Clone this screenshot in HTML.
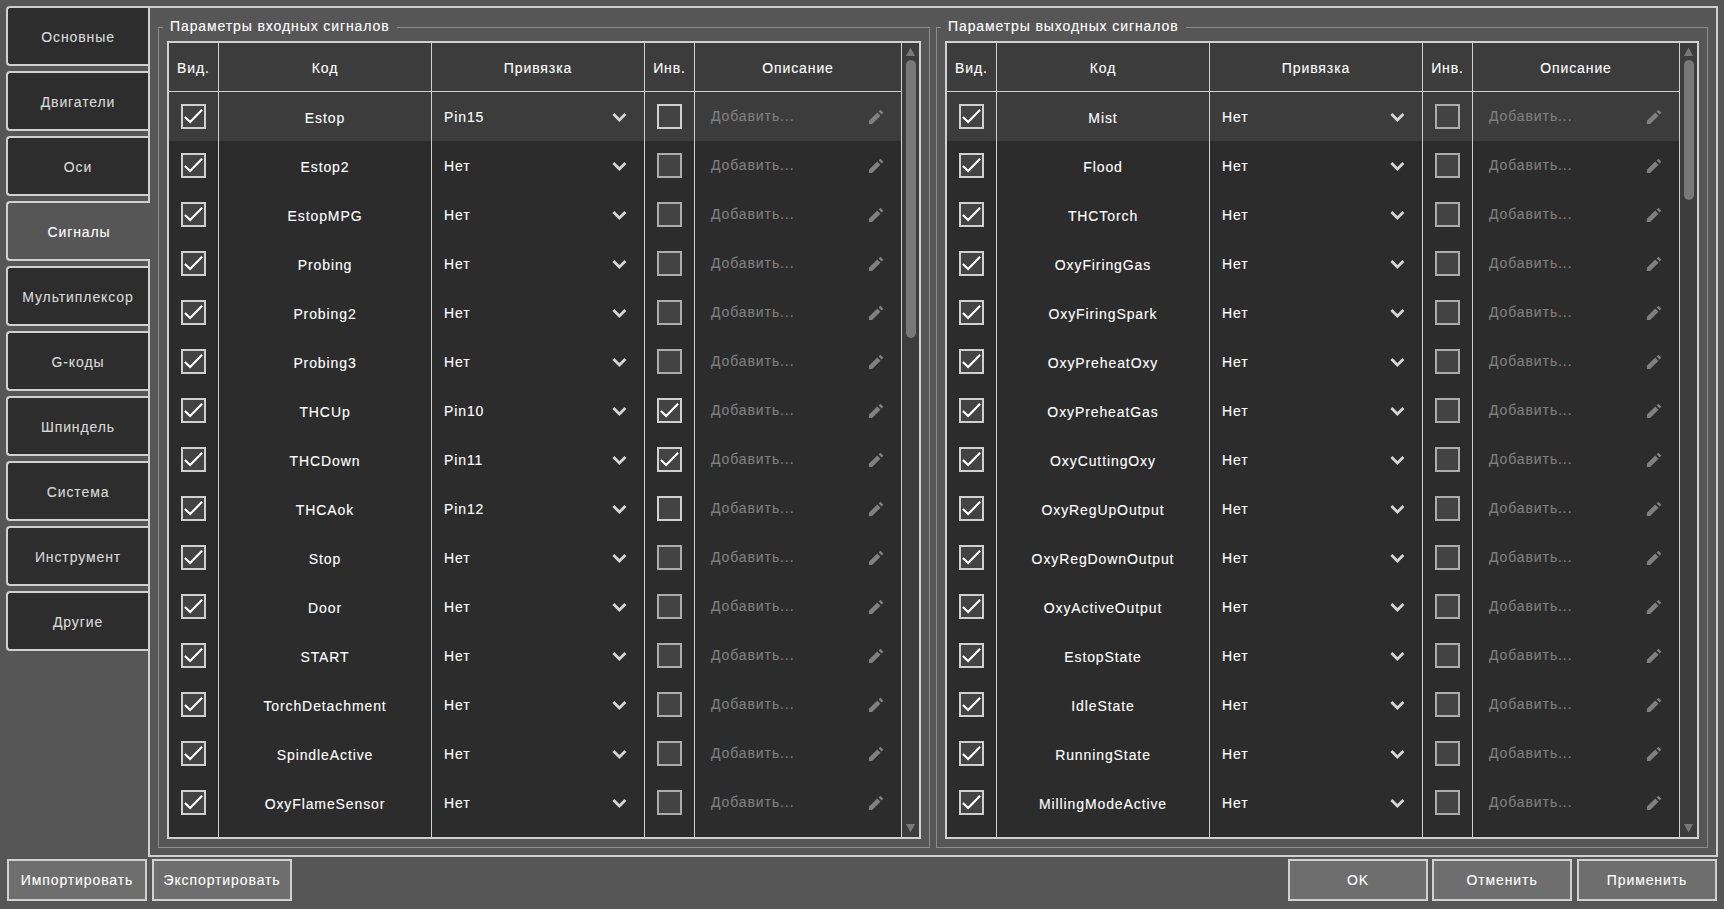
<!DOCTYPE html><html><head><meta charset="utf-8"><style>
*{box-sizing:border-box;margin:0;padding:0}
html,body{width:1724px;height:909px;overflow:hidden;background:#565656;font-family:"Liberation Sans",sans-serif;font-size:14px;letter-spacing:0.9px;color:#fff;-webkit-text-stroke:0.12px currentColor}
.a{position:absolute}
.tab{position:absolute;left:6px;width:142px;height:60px;border:2px solid #d0d0d0;border-right:none;border-radius:4px 0 0 4px;background:#2d2d2d;color:#dadada;text-align:center;line-height:58px}
.tab.on{background:#565656;color:#fff;width:144px}
.panel{position:absolute;left:148px;top:6px;width:1570px;height:851px;border:2px solid #d0d0d0;background:#565656}
.grp{position:absolute;top:27px;width:772px;height:821px;border:1px solid #8c8c8c}
.gt{position:absolute;top:17px;height:18px;line-height:18px;background:#565656;padding:0 7px;white-space:nowrap}
.tbl{position:absolute;top:41px;width:754px;height:798px;border:2px solid #d0d0d0;background:#2c2c2c;overflow:hidden}
.hdr{position:absolute;left:0;top:0;width:732px;height:49px;background:#3c3c3c;border-bottom:1px solid #d0d0d0}
.hc{position:absolute;top:1px;height:48px;line-height:48px;text-align:center;white-space:nowrap}
.vl{position:absolute;top:0;width:1px;height:794px;background:#d0d0d0}
.row{position:absolute;left:0;width:732px;height:49px}
.row.hl{background:#3c3c3c}
.cb{position:absolute;width:25px;height:25px;border:2px solid #d0d0d0;background:#434343;top:12px}
.cb svg{position:absolute;left:0;top:0}
.cb.dim{border-color:#acacac}
.code{position:absolute;left:50px;width:212px;top:2px;height:49px;line-height:49px;text-align:center;white-space:nowrap}
.bind{position:absolute;left:275px;top:1px;height:49px;line-height:49px;white-space:nowrap}
.chev{position:absolute;left:443px;top:19px}
.desc{position:absolute;left:542px;top:0px;height:49px;line-height:49px;color:#808080;white-space:nowrap}
.pen{position:absolute;left:697px;top:15px}
.sb{position:absolute;left:733px;top:0;width:17px;height:794px;background:#3c3c3c}
.btn{position:absolute;top:859px;width:140px;height:42px;border:2px solid #d0d0d0;background:#6e6e6e;text-align:center;line-height:38px;white-space:nowrap}
</style></head><body>
<div class="panel"></div>
<div class="tab" style="top:6px">Основные</div>
<div class="tab" style="top:71px">Двигатели</div>
<div class="tab" style="top:136px">Оси</div>
<div class="tab on" style="top:201px">Сигналы</div>
<div class="tab" style="top:266px">Мультиплексор</div>
<div class="tab" style="top:331px">G-коды</div>
<div class="tab" style="top:396px">Шпиндель</div>
<div class="tab" style="top:461px">Система</div>
<div class="tab" style="top:526px">Инструмент</div>
<div class="tab" style="top:591px">Другие</div>
<div class="grp" style="left:158px"></div>
<div class="gt" style="left:163px">Параметры входных сигналов</div>
<div class="grp" style="left:936px"></div>
<div class="gt" style="left:941px">Параметры выходных сигналов</div>
<div class="tbl" style="left:167px">
<div class="row hl" style="top:49px">
<div class="cb" style="left:12px"><svg width="21" height="21" viewBox="0 0 21 21"><polyline points="1.9,10.9 7.15,16.1 19.1,3.7" fill="none" stroke="#fff" stroke-width="2.1" stroke-linejoin="miter" stroke-linecap="butt"/></svg></div>
<div class="code">Estop</div>
<div class="bind">Pin15</div>
<div class="chev"><svg width="16" height="12" viewBox="0 0 16 12"><polyline points="1.4,2.1 7.4,8 13.4,2.1" fill="none" stroke="#d6d6d6" stroke-width="2.8"/></svg></div>
<div class="cb" style="left:488px"></div>
<div class="desc">Добавить...</div>
<div class="pen"><svg width="20" height="20" viewBox="0 0 20 20"><path fill="#808080" d="M2.9 17.1V13.8L11.25 5.45L14.5 8.7L6.1 17.1Z M12.6 4.6L14.35 2.85L17.35 5.85L15.6 7.6Z"/></svg></div>
</div>
<div class="row" style="top:98px">
<div class="cb" style="left:12px"><svg width="21" height="21" viewBox="0 0 21 21"><polyline points="1.9,10.9 7.15,16.1 19.1,3.7" fill="none" stroke="#fff" stroke-width="2.1" stroke-linejoin="miter" stroke-linecap="butt"/></svg></div>
<div class="code">Estop2</div>
<div class="bind">Нет</div>
<div class="chev"><svg width="16" height="12" viewBox="0 0 16 12"><polyline points="1.4,2.1 7.4,8 13.4,2.1" fill="none" stroke="#d6d6d6" stroke-width="2.8"/></svg></div>
<div class="cb dim" style="left:488px"></div>
<div class="desc">Добавить...</div>
<div class="pen"><svg width="20" height="20" viewBox="0 0 20 20"><path fill="#808080" d="M2.9 17.1V13.8L11.25 5.45L14.5 8.7L6.1 17.1Z M12.6 4.6L14.35 2.85L17.35 5.85L15.6 7.6Z"/></svg></div>
</div>
<div class="row" style="top:147px">
<div class="cb" style="left:12px"><svg width="21" height="21" viewBox="0 0 21 21"><polyline points="1.9,10.9 7.15,16.1 19.1,3.7" fill="none" stroke="#fff" stroke-width="2.1" stroke-linejoin="miter" stroke-linecap="butt"/></svg></div>
<div class="code">EstopMPG</div>
<div class="bind">Нет</div>
<div class="chev"><svg width="16" height="12" viewBox="0 0 16 12"><polyline points="1.4,2.1 7.4,8 13.4,2.1" fill="none" stroke="#d6d6d6" stroke-width="2.8"/></svg></div>
<div class="cb dim" style="left:488px"></div>
<div class="desc">Добавить...</div>
<div class="pen"><svg width="20" height="20" viewBox="0 0 20 20"><path fill="#808080" d="M2.9 17.1V13.8L11.25 5.45L14.5 8.7L6.1 17.1Z M12.6 4.6L14.35 2.85L17.35 5.85L15.6 7.6Z"/></svg></div>
</div>
<div class="row" style="top:196px">
<div class="cb" style="left:12px"><svg width="21" height="21" viewBox="0 0 21 21"><polyline points="1.9,10.9 7.15,16.1 19.1,3.7" fill="none" stroke="#fff" stroke-width="2.1" stroke-linejoin="miter" stroke-linecap="butt"/></svg></div>
<div class="code">Probing</div>
<div class="bind">Нет</div>
<div class="chev"><svg width="16" height="12" viewBox="0 0 16 12"><polyline points="1.4,2.1 7.4,8 13.4,2.1" fill="none" stroke="#d6d6d6" stroke-width="2.8"/></svg></div>
<div class="cb dim" style="left:488px"></div>
<div class="desc">Добавить...</div>
<div class="pen"><svg width="20" height="20" viewBox="0 0 20 20"><path fill="#808080" d="M2.9 17.1V13.8L11.25 5.45L14.5 8.7L6.1 17.1Z M12.6 4.6L14.35 2.85L17.35 5.85L15.6 7.6Z"/></svg></div>
</div>
<div class="row" style="top:245px">
<div class="cb" style="left:12px"><svg width="21" height="21" viewBox="0 0 21 21"><polyline points="1.9,10.9 7.15,16.1 19.1,3.7" fill="none" stroke="#fff" stroke-width="2.1" stroke-linejoin="miter" stroke-linecap="butt"/></svg></div>
<div class="code">Probing2</div>
<div class="bind">Нет</div>
<div class="chev"><svg width="16" height="12" viewBox="0 0 16 12"><polyline points="1.4,2.1 7.4,8 13.4,2.1" fill="none" stroke="#d6d6d6" stroke-width="2.8"/></svg></div>
<div class="cb dim" style="left:488px"></div>
<div class="desc">Добавить...</div>
<div class="pen"><svg width="20" height="20" viewBox="0 0 20 20"><path fill="#808080" d="M2.9 17.1V13.8L11.25 5.45L14.5 8.7L6.1 17.1Z M12.6 4.6L14.35 2.85L17.35 5.85L15.6 7.6Z"/></svg></div>
</div>
<div class="row" style="top:294px">
<div class="cb" style="left:12px"><svg width="21" height="21" viewBox="0 0 21 21"><polyline points="1.9,10.9 7.15,16.1 19.1,3.7" fill="none" stroke="#fff" stroke-width="2.1" stroke-linejoin="miter" stroke-linecap="butt"/></svg></div>
<div class="code">Probing3</div>
<div class="bind">Нет</div>
<div class="chev"><svg width="16" height="12" viewBox="0 0 16 12"><polyline points="1.4,2.1 7.4,8 13.4,2.1" fill="none" stroke="#d6d6d6" stroke-width="2.8"/></svg></div>
<div class="cb dim" style="left:488px"></div>
<div class="desc">Добавить...</div>
<div class="pen"><svg width="20" height="20" viewBox="0 0 20 20"><path fill="#808080" d="M2.9 17.1V13.8L11.25 5.45L14.5 8.7L6.1 17.1Z M12.6 4.6L14.35 2.85L17.35 5.85L15.6 7.6Z"/></svg></div>
</div>
<div class="row" style="top:343px">
<div class="cb" style="left:12px"><svg width="21" height="21" viewBox="0 0 21 21"><polyline points="1.9,10.9 7.15,16.1 19.1,3.7" fill="none" stroke="#fff" stroke-width="2.1" stroke-linejoin="miter" stroke-linecap="butt"/></svg></div>
<div class="code">THCUp</div>
<div class="bind">Pin10</div>
<div class="chev"><svg width="16" height="12" viewBox="0 0 16 12"><polyline points="1.4,2.1 7.4,8 13.4,2.1" fill="none" stroke="#d6d6d6" stroke-width="2.8"/></svg></div>
<div class="cb" style="left:488px"><svg width="21" height="21" viewBox="0 0 21 21"><polyline points="1.9,10.9 7.15,16.1 19.1,3.7" fill="none" stroke="#fff" stroke-width="2.1" stroke-linejoin="miter" stroke-linecap="butt"/></svg></div>
<div class="desc">Добавить...</div>
<div class="pen"><svg width="20" height="20" viewBox="0 0 20 20"><path fill="#808080" d="M2.9 17.1V13.8L11.25 5.45L14.5 8.7L6.1 17.1Z M12.6 4.6L14.35 2.85L17.35 5.85L15.6 7.6Z"/></svg></div>
</div>
<div class="row" style="top:392px">
<div class="cb" style="left:12px"><svg width="21" height="21" viewBox="0 0 21 21"><polyline points="1.9,10.9 7.15,16.1 19.1,3.7" fill="none" stroke="#fff" stroke-width="2.1" stroke-linejoin="miter" stroke-linecap="butt"/></svg></div>
<div class="code">THCDown</div>
<div class="bind">Pin11</div>
<div class="chev"><svg width="16" height="12" viewBox="0 0 16 12"><polyline points="1.4,2.1 7.4,8 13.4,2.1" fill="none" stroke="#d6d6d6" stroke-width="2.8"/></svg></div>
<div class="cb" style="left:488px"><svg width="21" height="21" viewBox="0 0 21 21"><polyline points="1.9,10.9 7.15,16.1 19.1,3.7" fill="none" stroke="#fff" stroke-width="2.1" stroke-linejoin="miter" stroke-linecap="butt"/></svg></div>
<div class="desc">Добавить...</div>
<div class="pen"><svg width="20" height="20" viewBox="0 0 20 20"><path fill="#808080" d="M2.9 17.1V13.8L11.25 5.45L14.5 8.7L6.1 17.1Z M12.6 4.6L14.35 2.85L17.35 5.85L15.6 7.6Z"/></svg></div>
</div>
<div class="row" style="top:441px">
<div class="cb" style="left:12px"><svg width="21" height="21" viewBox="0 0 21 21"><polyline points="1.9,10.9 7.15,16.1 19.1,3.7" fill="none" stroke="#fff" stroke-width="2.1" stroke-linejoin="miter" stroke-linecap="butt"/></svg></div>
<div class="code">THCAok</div>
<div class="bind">Pin12</div>
<div class="chev"><svg width="16" height="12" viewBox="0 0 16 12"><polyline points="1.4,2.1 7.4,8 13.4,2.1" fill="none" stroke="#d6d6d6" stroke-width="2.8"/></svg></div>
<div class="cb" style="left:488px"></div>
<div class="desc">Добавить...</div>
<div class="pen"><svg width="20" height="20" viewBox="0 0 20 20"><path fill="#808080" d="M2.9 17.1V13.8L11.25 5.45L14.5 8.7L6.1 17.1Z M12.6 4.6L14.35 2.85L17.35 5.85L15.6 7.6Z"/></svg></div>
</div>
<div class="row" style="top:490px">
<div class="cb" style="left:12px"><svg width="21" height="21" viewBox="0 0 21 21"><polyline points="1.9,10.9 7.15,16.1 19.1,3.7" fill="none" stroke="#fff" stroke-width="2.1" stroke-linejoin="miter" stroke-linecap="butt"/></svg></div>
<div class="code">Stop</div>
<div class="bind">Нет</div>
<div class="chev"><svg width="16" height="12" viewBox="0 0 16 12"><polyline points="1.4,2.1 7.4,8 13.4,2.1" fill="none" stroke="#d6d6d6" stroke-width="2.8"/></svg></div>
<div class="cb dim" style="left:488px"></div>
<div class="desc">Добавить...</div>
<div class="pen"><svg width="20" height="20" viewBox="0 0 20 20"><path fill="#808080" d="M2.9 17.1V13.8L11.25 5.45L14.5 8.7L6.1 17.1Z M12.6 4.6L14.35 2.85L17.35 5.85L15.6 7.6Z"/></svg></div>
</div>
<div class="row" style="top:539px">
<div class="cb" style="left:12px"><svg width="21" height="21" viewBox="0 0 21 21"><polyline points="1.9,10.9 7.15,16.1 19.1,3.7" fill="none" stroke="#fff" stroke-width="2.1" stroke-linejoin="miter" stroke-linecap="butt"/></svg></div>
<div class="code">Door</div>
<div class="bind">Нет</div>
<div class="chev"><svg width="16" height="12" viewBox="0 0 16 12"><polyline points="1.4,2.1 7.4,8 13.4,2.1" fill="none" stroke="#d6d6d6" stroke-width="2.8"/></svg></div>
<div class="cb dim" style="left:488px"></div>
<div class="desc">Добавить...</div>
<div class="pen"><svg width="20" height="20" viewBox="0 0 20 20"><path fill="#808080" d="M2.9 17.1V13.8L11.25 5.45L14.5 8.7L6.1 17.1Z M12.6 4.6L14.35 2.85L17.35 5.85L15.6 7.6Z"/></svg></div>
</div>
<div class="row" style="top:588px">
<div class="cb" style="left:12px"><svg width="21" height="21" viewBox="0 0 21 21"><polyline points="1.9,10.9 7.15,16.1 19.1,3.7" fill="none" stroke="#fff" stroke-width="2.1" stroke-linejoin="miter" stroke-linecap="butt"/></svg></div>
<div class="code">START</div>
<div class="bind">Нет</div>
<div class="chev"><svg width="16" height="12" viewBox="0 0 16 12"><polyline points="1.4,2.1 7.4,8 13.4,2.1" fill="none" stroke="#d6d6d6" stroke-width="2.8"/></svg></div>
<div class="cb dim" style="left:488px"></div>
<div class="desc">Добавить...</div>
<div class="pen"><svg width="20" height="20" viewBox="0 0 20 20"><path fill="#808080" d="M2.9 17.1V13.8L11.25 5.45L14.5 8.7L6.1 17.1Z M12.6 4.6L14.35 2.85L17.35 5.85L15.6 7.6Z"/></svg></div>
</div>
<div class="row" style="top:637px">
<div class="cb" style="left:12px"><svg width="21" height="21" viewBox="0 0 21 21"><polyline points="1.9,10.9 7.15,16.1 19.1,3.7" fill="none" stroke="#fff" stroke-width="2.1" stroke-linejoin="miter" stroke-linecap="butt"/></svg></div>
<div class="code">TorchDetachment</div>
<div class="bind">Нет</div>
<div class="chev"><svg width="16" height="12" viewBox="0 0 16 12"><polyline points="1.4,2.1 7.4,8 13.4,2.1" fill="none" stroke="#d6d6d6" stroke-width="2.8"/></svg></div>
<div class="cb dim" style="left:488px"></div>
<div class="desc">Добавить...</div>
<div class="pen"><svg width="20" height="20" viewBox="0 0 20 20"><path fill="#808080" d="M2.9 17.1V13.8L11.25 5.45L14.5 8.7L6.1 17.1Z M12.6 4.6L14.35 2.85L17.35 5.85L15.6 7.6Z"/></svg></div>
</div>
<div class="row" style="top:686px">
<div class="cb" style="left:12px"><svg width="21" height="21" viewBox="0 0 21 21"><polyline points="1.9,10.9 7.15,16.1 19.1,3.7" fill="none" stroke="#fff" stroke-width="2.1" stroke-linejoin="miter" stroke-linecap="butt"/></svg></div>
<div class="code">SpindleActive</div>
<div class="bind">Нет</div>
<div class="chev"><svg width="16" height="12" viewBox="0 0 16 12"><polyline points="1.4,2.1 7.4,8 13.4,2.1" fill="none" stroke="#d6d6d6" stroke-width="2.8"/></svg></div>
<div class="cb dim" style="left:488px"></div>
<div class="desc">Добавить...</div>
<div class="pen"><svg width="20" height="20" viewBox="0 0 20 20"><path fill="#808080" d="M2.9 17.1V13.8L11.25 5.45L14.5 8.7L6.1 17.1Z M12.6 4.6L14.35 2.85L17.35 5.85L15.6 7.6Z"/></svg></div>
</div>
<div class="row" style="top:735px">
<div class="cb" style="left:12px"><svg width="21" height="21" viewBox="0 0 21 21"><polyline points="1.9,10.9 7.15,16.1 19.1,3.7" fill="none" stroke="#fff" stroke-width="2.1" stroke-linejoin="miter" stroke-linecap="butt"/></svg></div>
<div class="code">OxyFlameSensor</div>
<div class="bind">Нет</div>
<div class="chev"><svg width="16" height="12" viewBox="0 0 16 12"><polyline points="1.4,2.1 7.4,8 13.4,2.1" fill="none" stroke="#d6d6d6" stroke-width="2.8"/></svg></div>
<div class="cb dim" style="left:488px"></div>
<div class="desc">Добавить...</div>
<div class="pen"><svg width="20" height="20" viewBox="0 0 20 20"><path fill="#808080" d="M2.9 17.1V13.8L11.25 5.45L14.5 8.7L6.1 17.1Z M12.6 4.6L14.35 2.85L17.35 5.85L15.6 7.6Z"/></svg></div>
</div>
<div class="hdr">
<div class="hc" style="left:0px;width:49px">Вид.</div>
<div class="hc" style="left:50px;width:212px">Код</div>
<div class="hc" style="left:263px;width:212px">Привязка</div>
<div class="hc" style="left:476px;width:49px">Инв.</div>
<div class="hc" style="left:526px;width:206px">Описание</div>
</div>
<div class="vl" style="left:49px"></div>
<div class="vl" style="left:262px"></div>
<div class="vl" style="left:475px"></div>
<div class="vl" style="left:525px"></div>
<div class="vl" style="left:732px"></div>
<div class="sb">
<svg class="a" style="left:0;top:0" width="17" height="794"><polygon points="4,13 13,13 8.5,4.5" fill="#787878"/><polygon points="4,781 13,781 8.5,789.5" fill="#787878"/><rect x="4" y="17" width="10" height="278" rx="5" fill="#787878"/></svg>
</div>
</div>
<div class="tbl" style="left:945px">
<div class="row hl" style="top:49px">
<div class="cb" style="left:12px"><svg width="21" height="21" viewBox="0 0 21 21"><polyline points="1.9,10.9 7.15,16.1 19.1,3.7" fill="none" stroke="#fff" stroke-width="2.1" stroke-linejoin="miter" stroke-linecap="butt"/></svg></div>
<div class="code">Mist</div>
<div class="bind">Нет</div>
<div class="chev"><svg width="16" height="12" viewBox="0 0 16 12"><polyline points="1.4,2.1 7.4,8 13.4,2.1" fill="none" stroke="#d6d6d6" stroke-width="2.8"/></svg></div>
<div class="cb dim" style="left:488px"></div>
<div class="desc">Добавить...</div>
<div class="pen"><svg width="20" height="20" viewBox="0 0 20 20"><path fill="#808080" d="M2.9 17.1V13.8L11.25 5.45L14.5 8.7L6.1 17.1Z M12.6 4.6L14.35 2.85L17.35 5.85L15.6 7.6Z"/></svg></div>
</div>
<div class="row" style="top:98px">
<div class="cb" style="left:12px"><svg width="21" height="21" viewBox="0 0 21 21"><polyline points="1.9,10.9 7.15,16.1 19.1,3.7" fill="none" stroke="#fff" stroke-width="2.1" stroke-linejoin="miter" stroke-linecap="butt"/></svg></div>
<div class="code">Flood</div>
<div class="bind">Нет</div>
<div class="chev"><svg width="16" height="12" viewBox="0 0 16 12"><polyline points="1.4,2.1 7.4,8 13.4,2.1" fill="none" stroke="#d6d6d6" stroke-width="2.8"/></svg></div>
<div class="cb dim" style="left:488px"></div>
<div class="desc">Добавить...</div>
<div class="pen"><svg width="20" height="20" viewBox="0 0 20 20"><path fill="#808080" d="M2.9 17.1V13.8L11.25 5.45L14.5 8.7L6.1 17.1Z M12.6 4.6L14.35 2.85L17.35 5.85L15.6 7.6Z"/></svg></div>
</div>
<div class="row" style="top:147px">
<div class="cb" style="left:12px"><svg width="21" height="21" viewBox="0 0 21 21"><polyline points="1.9,10.9 7.15,16.1 19.1,3.7" fill="none" stroke="#fff" stroke-width="2.1" stroke-linejoin="miter" stroke-linecap="butt"/></svg></div>
<div class="code">THCTorch</div>
<div class="bind">Нет</div>
<div class="chev"><svg width="16" height="12" viewBox="0 0 16 12"><polyline points="1.4,2.1 7.4,8 13.4,2.1" fill="none" stroke="#d6d6d6" stroke-width="2.8"/></svg></div>
<div class="cb dim" style="left:488px"></div>
<div class="desc">Добавить...</div>
<div class="pen"><svg width="20" height="20" viewBox="0 0 20 20"><path fill="#808080" d="M2.9 17.1V13.8L11.25 5.45L14.5 8.7L6.1 17.1Z M12.6 4.6L14.35 2.85L17.35 5.85L15.6 7.6Z"/></svg></div>
</div>
<div class="row" style="top:196px">
<div class="cb" style="left:12px"><svg width="21" height="21" viewBox="0 0 21 21"><polyline points="1.9,10.9 7.15,16.1 19.1,3.7" fill="none" stroke="#fff" stroke-width="2.1" stroke-linejoin="miter" stroke-linecap="butt"/></svg></div>
<div class="code">OxyFiringGas</div>
<div class="bind">Нет</div>
<div class="chev"><svg width="16" height="12" viewBox="0 0 16 12"><polyline points="1.4,2.1 7.4,8 13.4,2.1" fill="none" stroke="#d6d6d6" stroke-width="2.8"/></svg></div>
<div class="cb dim" style="left:488px"></div>
<div class="desc">Добавить...</div>
<div class="pen"><svg width="20" height="20" viewBox="0 0 20 20"><path fill="#808080" d="M2.9 17.1V13.8L11.25 5.45L14.5 8.7L6.1 17.1Z M12.6 4.6L14.35 2.85L17.35 5.85L15.6 7.6Z"/></svg></div>
</div>
<div class="row" style="top:245px">
<div class="cb" style="left:12px"><svg width="21" height="21" viewBox="0 0 21 21"><polyline points="1.9,10.9 7.15,16.1 19.1,3.7" fill="none" stroke="#fff" stroke-width="2.1" stroke-linejoin="miter" stroke-linecap="butt"/></svg></div>
<div class="code">OxyFiringSpark</div>
<div class="bind">Нет</div>
<div class="chev"><svg width="16" height="12" viewBox="0 0 16 12"><polyline points="1.4,2.1 7.4,8 13.4,2.1" fill="none" stroke="#d6d6d6" stroke-width="2.8"/></svg></div>
<div class="cb dim" style="left:488px"></div>
<div class="desc">Добавить...</div>
<div class="pen"><svg width="20" height="20" viewBox="0 0 20 20"><path fill="#808080" d="M2.9 17.1V13.8L11.25 5.45L14.5 8.7L6.1 17.1Z M12.6 4.6L14.35 2.85L17.35 5.85L15.6 7.6Z"/></svg></div>
</div>
<div class="row" style="top:294px">
<div class="cb" style="left:12px"><svg width="21" height="21" viewBox="0 0 21 21"><polyline points="1.9,10.9 7.15,16.1 19.1,3.7" fill="none" stroke="#fff" stroke-width="2.1" stroke-linejoin="miter" stroke-linecap="butt"/></svg></div>
<div class="code">OxyPreheatOxy</div>
<div class="bind">Нет</div>
<div class="chev"><svg width="16" height="12" viewBox="0 0 16 12"><polyline points="1.4,2.1 7.4,8 13.4,2.1" fill="none" stroke="#d6d6d6" stroke-width="2.8"/></svg></div>
<div class="cb dim" style="left:488px"></div>
<div class="desc">Добавить...</div>
<div class="pen"><svg width="20" height="20" viewBox="0 0 20 20"><path fill="#808080" d="M2.9 17.1V13.8L11.25 5.45L14.5 8.7L6.1 17.1Z M12.6 4.6L14.35 2.85L17.35 5.85L15.6 7.6Z"/></svg></div>
</div>
<div class="row" style="top:343px">
<div class="cb" style="left:12px"><svg width="21" height="21" viewBox="0 0 21 21"><polyline points="1.9,10.9 7.15,16.1 19.1,3.7" fill="none" stroke="#fff" stroke-width="2.1" stroke-linejoin="miter" stroke-linecap="butt"/></svg></div>
<div class="code">OxyPreheatGas</div>
<div class="bind">Нет</div>
<div class="chev"><svg width="16" height="12" viewBox="0 0 16 12"><polyline points="1.4,2.1 7.4,8 13.4,2.1" fill="none" stroke="#d6d6d6" stroke-width="2.8"/></svg></div>
<div class="cb dim" style="left:488px"></div>
<div class="desc">Добавить...</div>
<div class="pen"><svg width="20" height="20" viewBox="0 0 20 20"><path fill="#808080" d="M2.9 17.1V13.8L11.25 5.45L14.5 8.7L6.1 17.1Z M12.6 4.6L14.35 2.85L17.35 5.85L15.6 7.6Z"/></svg></div>
</div>
<div class="row" style="top:392px">
<div class="cb" style="left:12px"><svg width="21" height="21" viewBox="0 0 21 21"><polyline points="1.9,10.9 7.15,16.1 19.1,3.7" fill="none" stroke="#fff" stroke-width="2.1" stroke-linejoin="miter" stroke-linecap="butt"/></svg></div>
<div class="code">OxyCuttingOxy</div>
<div class="bind">Нет</div>
<div class="chev"><svg width="16" height="12" viewBox="0 0 16 12"><polyline points="1.4,2.1 7.4,8 13.4,2.1" fill="none" stroke="#d6d6d6" stroke-width="2.8"/></svg></div>
<div class="cb dim" style="left:488px"></div>
<div class="desc">Добавить...</div>
<div class="pen"><svg width="20" height="20" viewBox="0 0 20 20"><path fill="#808080" d="M2.9 17.1V13.8L11.25 5.45L14.5 8.7L6.1 17.1Z M12.6 4.6L14.35 2.85L17.35 5.85L15.6 7.6Z"/></svg></div>
</div>
<div class="row" style="top:441px">
<div class="cb" style="left:12px"><svg width="21" height="21" viewBox="0 0 21 21"><polyline points="1.9,10.9 7.15,16.1 19.1,3.7" fill="none" stroke="#fff" stroke-width="2.1" stroke-linejoin="miter" stroke-linecap="butt"/></svg></div>
<div class="code">OxyRegUpOutput</div>
<div class="bind">Нет</div>
<div class="chev"><svg width="16" height="12" viewBox="0 0 16 12"><polyline points="1.4,2.1 7.4,8 13.4,2.1" fill="none" stroke="#d6d6d6" stroke-width="2.8"/></svg></div>
<div class="cb dim" style="left:488px"></div>
<div class="desc">Добавить...</div>
<div class="pen"><svg width="20" height="20" viewBox="0 0 20 20"><path fill="#808080" d="M2.9 17.1V13.8L11.25 5.45L14.5 8.7L6.1 17.1Z M12.6 4.6L14.35 2.85L17.35 5.85L15.6 7.6Z"/></svg></div>
</div>
<div class="row" style="top:490px">
<div class="cb" style="left:12px"><svg width="21" height="21" viewBox="0 0 21 21"><polyline points="1.9,10.9 7.15,16.1 19.1,3.7" fill="none" stroke="#fff" stroke-width="2.1" stroke-linejoin="miter" stroke-linecap="butt"/></svg></div>
<div class="code">OxyRegDownOutput</div>
<div class="bind">Нет</div>
<div class="chev"><svg width="16" height="12" viewBox="0 0 16 12"><polyline points="1.4,2.1 7.4,8 13.4,2.1" fill="none" stroke="#d6d6d6" stroke-width="2.8"/></svg></div>
<div class="cb dim" style="left:488px"></div>
<div class="desc">Добавить...</div>
<div class="pen"><svg width="20" height="20" viewBox="0 0 20 20"><path fill="#808080" d="M2.9 17.1V13.8L11.25 5.45L14.5 8.7L6.1 17.1Z M12.6 4.6L14.35 2.85L17.35 5.85L15.6 7.6Z"/></svg></div>
</div>
<div class="row" style="top:539px">
<div class="cb" style="left:12px"><svg width="21" height="21" viewBox="0 0 21 21"><polyline points="1.9,10.9 7.15,16.1 19.1,3.7" fill="none" stroke="#fff" stroke-width="2.1" stroke-linejoin="miter" stroke-linecap="butt"/></svg></div>
<div class="code">OxyActiveOutput</div>
<div class="bind">Нет</div>
<div class="chev"><svg width="16" height="12" viewBox="0 0 16 12"><polyline points="1.4,2.1 7.4,8 13.4,2.1" fill="none" stroke="#d6d6d6" stroke-width="2.8"/></svg></div>
<div class="cb dim" style="left:488px"></div>
<div class="desc">Добавить...</div>
<div class="pen"><svg width="20" height="20" viewBox="0 0 20 20"><path fill="#808080" d="M2.9 17.1V13.8L11.25 5.45L14.5 8.7L6.1 17.1Z M12.6 4.6L14.35 2.85L17.35 5.85L15.6 7.6Z"/></svg></div>
</div>
<div class="row" style="top:588px">
<div class="cb" style="left:12px"><svg width="21" height="21" viewBox="0 0 21 21"><polyline points="1.9,10.9 7.15,16.1 19.1,3.7" fill="none" stroke="#fff" stroke-width="2.1" stroke-linejoin="miter" stroke-linecap="butt"/></svg></div>
<div class="code">EstopState</div>
<div class="bind">Нет</div>
<div class="chev"><svg width="16" height="12" viewBox="0 0 16 12"><polyline points="1.4,2.1 7.4,8 13.4,2.1" fill="none" stroke="#d6d6d6" stroke-width="2.8"/></svg></div>
<div class="cb dim" style="left:488px"></div>
<div class="desc">Добавить...</div>
<div class="pen"><svg width="20" height="20" viewBox="0 0 20 20"><path fill="#808080" d="M2.9 17.1V13.8L11.25 5.45L14.5 8.7L6.1 17.1Z M12.6 4.6L14.35 2.85L17.35 5.85L15.6 7.6Z"/></svg></div>
</div>
<div class="row" style="top:637px">
<div class="cb" style="left:12px"><svg width="21" height="21" viewBox="0 0 21 21"><polyline points="1.9,10.9 7.15,16.1 19.1,3.7" fill="none" stroke="#fff" stroke-width="2.1" stroke-linejoin="miter" stroke-linecap="butt"/></svg></div>
<div class="code">IdleState</div>
<div class="bind">Нет</div>
<div class="chev"><svg width="16" height="12" viewBox="0 0 16 12"><polyline points="1.4,2.1 7.4,8 13.4,2.1" fill="none" stroke="#d6d6d6" stroke-width="2.8"/></svg></div>
<div class="cb dim" style="left:488px"></div>
<div class="desc">Добавить...</div>
<div class="pen"><svg width="20" height="20" viewBox="0 0 20 20"><path fill="#808080" d="M2.9 17.1V13.8L11.25 5.45L14.5 8.7L6.1 17.1Z M12.6 4.6L14.35 2.85L17.35 5.85L15.6 7.6Z"/></svg></div>
</div>
<div class="row" style="top:686px">
<div class="cb" style="left:12px"><svg width="21" height="21" viewBox="0 0 21 21"><polyline points="1.9,10.9 7.15,16.1 19.1,3.7" fill="none" stroke="#fff" stroke-width="2.1" stroke-linejoin="miter" stroke-linecap="butt"/></svg></div>
<div class="code">RunningState</div>
<div class="bind">Нет</div>
<div class="chev"><svg width="16" height="12" viewBox="0 0 16 12"><polyline points="1.4,2.1 7.4,8 13.4,2.1" fill="none" stroke="#d6d6d6" stroke-width="2.8"/></svg></div>
<div class="cb dim" style="left:488px"></div>
<div class="desc">Добавить...</div>
<div class="pen"><svg width="20" height="20" viewBox="0 0 20 20"><path fill="#808080" d="M2.9 17.1V13.8L11.25 5.45L14.5 8.7L6.1 17.1Z M12.6 4.6L14.35 2.85L17.35 5.85L15.6 7.6Z"/></svg></div>
</div>
<div class="row" style="top:735px">
<div class="cb" style="left:12px"><svg width="21" height="21" viewBox="0 0 21 21"><polyline points="1.9,10.9 7.15,16.1 19.1,3.7" fill="none" stroke="#fff" stroke-width="2.1" stroke-linejoin="miter" stroke-linecap="butt"/></svg></div>
<div class="code">MillingModeActive</div>
<div class="bind">Нет</div>
<div class="chev"><svg width="16" height="12" viewBox="0 0 16 12"><polyline points="1.4,2.1 7.4,8 13.4,2.1" fill="none" stroke="#d6d6d6" stroke-width="2.8"/></svg></div>
<div class="cb dim" style="left:488px"></div>
<div class="desc">Добавить...</div>
<div class="pen"><svg width="20" height="20" viewBox="0 0 20 20"><path fill="#808080" d="M2.9 17.1V13.8L11.25 5.45L14.5 8.7L6.1 17.1Z M12.6 4.6L14.35 2.85L17.35 5.85L15.6 7.6Z"/></svg></div>
</div>
<div class="hdr">
<div class="hc" style="left:0px;width:49px">Вид.</div>
<div class="hc" style="left:50px;width:212px">Код</div>
<div class="hc" style="left:263px;width:212px">Привязка</div>
<div class="hc" style="left:476px;width:49px">Инв.</div>
<div class="hc" style="left:526px;width:206px">Описание</div>
</div>
<div class="vl" style="left:49px"></div>
<div class="vl" style="left:262px"></div>
<div class="vl" style="left:475px"></div>
<div class="vl" style="left:525px"></div>
<div class="vl" style="left:732px"></div>
<div class="sb">
<svg class="a" style="left:0;top:0" width="17" height="794"><polygon points="4,13 13,13 8.5,4.5" fill="#787878"/><polygon points="4,781 13,781 8.5,789.5" fill="#787878"/><rect x="4" y="17" width="10" height="140" rx="5" fill="#787878"/></svg>
</div>
</div>
<div class="btn" style="left:7px">Импортировать</div>
<div class="btn" style="left:152px">Экспортировать</div>
<div class="btn" style="left:1288px">OK</div>
<div class="btn" style="left:1432px">Отменить</div>
<div class="btn" style="left:1577px">Применить</div>
</body></html>
